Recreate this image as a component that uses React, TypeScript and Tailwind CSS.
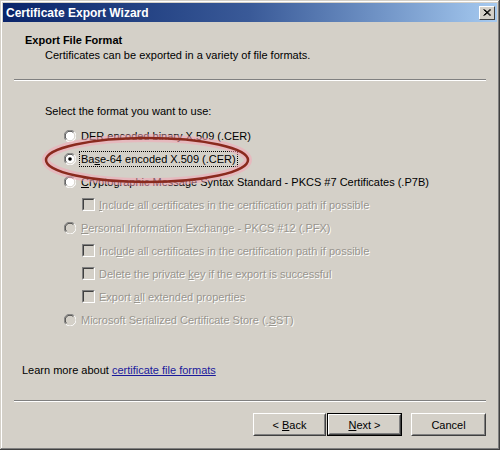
import React from 'react';

const font = { fontFamily: '"Liberation Sans", Arial, sans-serif' };

function Radio({ checked, disabled }: { checked?: boolean; disabled?: boolean }) {
  return (
    <svg width="12" height="12" viewBox="0 0 12 12" className="shrink-0">
      <circle cx="6" cy="6" r="5.5" fill={disabled ? '#d4d0c8' : '#fff'} />
      <path d="M10.2 1.8 A5.5 5.5 0 0 0 1.8 10.2" fill="none" stroke="#808080" strokeWidth="1" />
      <path d="M9.4 2.6 A4.4 4.4 0 0 0 2.6 9.4" fill="none" stroke="#404040" strokeWidth="1" />
      <path d="M1.8 10.2 A5.5 5.5 0 0 0 10.2 1.8" fill="none" stroke="#fff" strokeWidth="1" />
      <path d="M2.6 9.4 A4.4 4.4 0 0 0 9.4 2.6" fill="none" stroke="#d4d0c8" strokeWidth="1" />
      {checked && <circle cx="6" cy="6" r="1.8" fill="#000" />}
    </svg>
  );
}

function Check() {
  return (
    <span className="w-[13px] h-[13px] shrink-0 border border-t-[#808080] border-l-[#808080] border-r-white border-b-white">
      <span className="block w-full h-full bg-[#d4d0c8] border border-t-[#404040] border-l-[#404040] border-r-[#d4d0c8] border-b-[#d4d0c8]" />
    </span>
  );
}

const dis = 'text-[#98958e] [text-shadow:1px_1px_0_#ffffff]';

function Opt({ children, disabled, checked, focus }: { children: React.ReactNode; disabled?: boolean; checked?: boolean; focus?: boolean }) {
  return (
    <div className="h-[23px] flex items-center pl-[50px] gap-[4px]">
      <Radio checked={checked} disabled={disabled} />
      <span className={`${disabled ? dis : 'text-black'} ${focus ? 'outline outline-1 outline-dotted outline-black' : ''} px-[1px]`}>
        {children}
      </span>
    </div>
  );
}

function Box({ children }: { children: React.ReactNode }) {
  return (
    <div className="h-[23px] flex items-center pl-[68px] gap-[4px]">
      <Check />
      <span className={dis}>{children}</span>
    </div>
  );
}

function Btn({ children, def, w }: { children: React.ReactNode; def?: boolean; w: string }) {
  return (
    <div className={`h-[23px] ${w} ${def ? 'border border-black' : ''} bg-[#d4d0c8]`}>
      <div className="h-full border border-t-white border-l-white border-r-[#404040] border-b-[#404040]">
        <div className="w-full h-full flex items-center justify-center border border-t-[#d4d0c8] border-l-[#d4d0c8] border-r-[#808080] border-b-[#808080]">
          <span>{children}</span>
        </div>
      </div>
    </div>
  );
}

export default function App() {
  return (
    <div style={font} className="w-[500px] h-[450px] bg-[#d4d0c8] text-[11px] leading-[14px] text-black p-[3px] shadow-[inset_-1px_-1px_#404040,inset_1px_1px_#d4d0c8,inset_-2px_-2px_#808080,inset_2px_2px_#ffffff] relative overflow-hidden">
      <div className="h-[19px] bg-gradient-to-r from-[#0a246a] via-[#3a5a98] to-[#a6caf0] flex items-center justify-between pl-[3px] pr-[2px]">
        <span className="text-white font-bold text-[12px]">Certificate Export Wizard</span>
        <div className="w-[16px] h-[14px] bg-[#d4d0c8] border border-t-white border-l-white border-r-[#404040] border-b-[#404040] flex items-center justify-center">
          <svg width="8" height="7" viewBox="0 0 8 7">
            <path d="M0.5 0.5 L7 6.5 M1.5 0.5 L8 6.5 M7 0.5 L0.5 6.5 M8 0.5 L1.5 6.5" stroke="#000" strokeWidth="1" />
          </svg>
        </div>
      </div>

      <div className="px-[11px]">
        <div className="pt-[11px] pl-[11px] font-bold">Export File Format</div>
        <div className="pl-[31px] pt-[1px]">Certificates can be exported in a variety of file formats.</div>
        <div className="mt-[17px] border-t border-t-[#808080] border-b border-b-white" />

        <div className="pl-[31px] pt-[23px]">Select the format you want to use:</div>
        <div className="mt-[6px]">
          <Opt>DER encoded binary X.509 (.CER)</Opt>
          <Opt checked focus>
            Ba<u>s</u>e-64 encoded X.509 (.CER)
          </Opt>
          <Opt>
            <u>C</u>ryptographic Message Syntax Standard - PKCS #7 Certificates (.P7B)
          </Opt>
          <Box>
            <u>I</u>nclude all certificates in the certification path if possible
          </Box>
          <Opt disabled>
            <u>P</u>ersonal Information Exchange - PKCS #12 (.PFX)
          </Opt>
          <Box>
            Incl<u>u</u>de all certificates in the certification path if possible
          </Box>
          <Box>
            Delete the private <u>k</u>ey if the export is successful
          </Box>
          <Box>
            Export <u>a</u>ll extended properties
          </Box>
          <Opt disabled>
            Microsoft Serialized Certificate Store (.<u>S</u>ST)
          </Opt>
        </div>

        <div className="pl-[8px] pt-[32px]">
          Learn more about <span className="text-[#1a1a9c] underline">certificate file formats</span>
        </div>
        <div className="mt-[23px] border-t border-t-[#808080] border-b border-b-white" />

        <div className="flex justify-end pt-[11px] gap-[9px]">
          <div className="flex gap-[1px]">
            <Btn w="w-[73px]">
              &lt;&nbsp;<u>B</u>ack
            </Btn>
            <Btn def w="w-[75px]">
              <u>N</u>ext&nbsp;&gt;
            </Btn>
          </div>
          <Btn w="w-[75px]">Cancel</Btn>
        </div>
      </div>

      <svg className="absolute left-[40px] top-[132px] pointer-events-none" width="214" height="56" viewBox="0 0 214 56">
        <ellipse cx="107" cy="28" rx="101" ry="22" fill="none" stroke="#f4a6b6" strokeOpacity="0.55" strokeWidth="8" />
        <ellipse cx="107" cy="28" rx="101" ry="22" fill="none" stroke="#8a2a1e" strokeWidth="2.5" />
      </svg>
    </div>
  );
}
